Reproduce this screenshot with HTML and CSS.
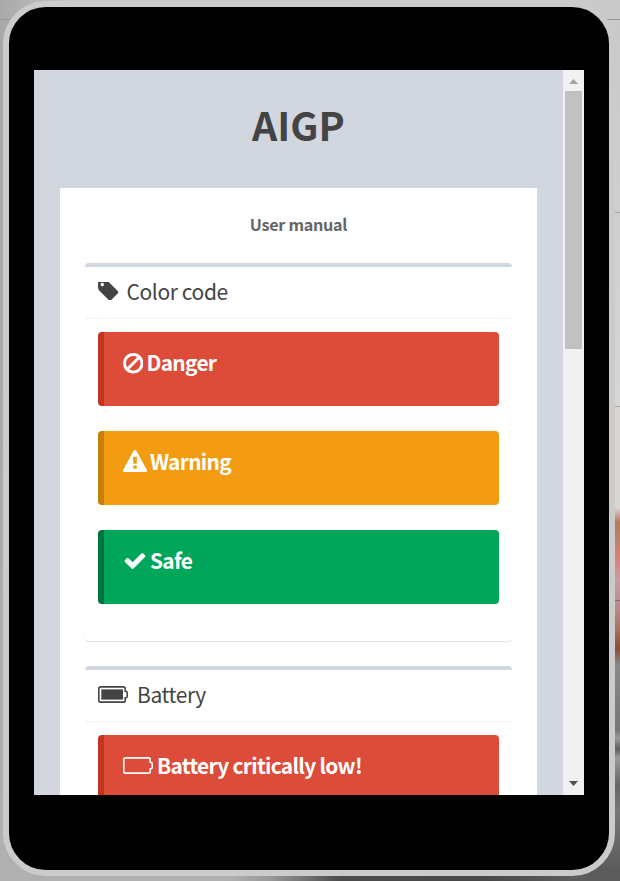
FILE: index.html
```
<!DOCTYPE html>
<html lang="en">
<head>
<meta charset="utf-8">
<title>AIGP</title>
<link rel="stylesheet" href="styles.css">
</head>
<body>
<div class="backdrop"></div>
<div class="tablet">
  <div class="screen">
    <main class="page">
      <h1 class="brand">AIGP</h1>
      <div class="manual">
        <p class="subtitle">User manual</p>
        <section class="box">
          <h2 class="box-title">
            <svg class="tag" viewBox="128 256 1536 1408"><path d="M576 448q0-53-37.500-90.500t-90.500-37.500-90.500 37.500-37.500 90.500 37.500 90.500 90.500 37.500 90.500-37.500 37.500-90.500zm1067 576q0 53-37 90l-491 492q-39 37-91 37-53 0-90-37l-715-716q-38-37-64.500-101t-26.500-117v-416q0-52 38-90t90-38h416q53 0 117 26.500t102 64.500l715 714q37 39 37 91z"/></svg>
            <span>Color code</span>
          </h2>
          <div class="alert danger">
            <svg class="ban" viewBox="128 125 1536 1536"><path d="M1440 893q0-161-87-295l-754 753q137 89 297 89 111 0 211.500-43.500t173.500-116.500 116-174.500 43-212.500zm-999 299l755-754q-135-91-300-91-148 0-273 73t-198 199-73 274q0 162 89 299zm1223-299q0 157-61 300t-163.500 246-245 164-298.500 61-298.500-61-245-164-163.500-246-61-300 61-299.500 163.500-245.500 245-164 298.500-61 298.500 61 245 164 163.500 245.500 61 299.500z"/></svg>
            <span>Danger</span>
          </div>
          <div class="alert warning">
            <svg class="triangle" viewBox="0 0 1792 1664"><path d="M1024 1375v-190q0-14-9.500-23.500t-22.500-9.500h-192q-13 0-22.500 9.500t-9.500 23.500v190q0 14 9.500 23.500t22.500 9.500h192q13 0 22.500-9.500t9.500-23.500zm-2-374l18-459q0-12-10-19-13-11-24-11h-220q-11 0-24 11-10 7-10 21l17 457q0 10 10 16.500t24 6.500h185q14 0 23.500-6.500t10.500-16.500zm-14-934l768 1408q35 63-2 126-17 29-46.500 46t-63.500 17h-1536q-34 0-63.500-17t-46.500-46q-37-63-2-126l768-1408q17-31 47-49t65-18 65 18 47 49z"/></svg>
            <span>Warning</span>
          </div>
          <div class="alert safe">
            <svg class="check" viewBox="0 334 1792 1188"><path d="M1671 566q0 40-28 68l-724 724-136 136q-28 28-68 28t-68-28l-136-136-362-362q-28-28-28-68t28-68l136-136q28-28 68-28t68 28l294 295 656-657q28-28 68-28t68 28l136 136q28 28 28 68z"/></svg>
            <span>Safe</span>
          </div>
        </section>
        <section class="box">
          <h2 class="box-title">
            <svg class="battery" viewBox="0 0 31 17"><path class="shell" d="M2.500 .9H25.500Q27.200 .9 27.200 2.600V5.200H27.900Q29.200 5.200 29.200 6.500V10.500Q29.200 11.800 27.900 11.800H27.200V14.400Q27.200 16.100 25.500 16.100H2.500Q.8 16.100 .8 14.400V2.600Q.8 .9 2.500 .9Z"/><path d="M3.300 3.400H25V13.600H3.300Z"/></svg>
            <span>Battery</span>
          </h2>
          <div class="alert danger">
            <svg class="battery" viewBox="0 0 31 17"><path class="shell" d="M2.500 .9H25.500Q27.200 .9 27.200 2.600V5.200H27.900Q29.200 5.200 29.200 6.500V10.500Q29.200 11.800 27.900 11.800H27.200V14.400Q27.200 16.100 25.500 16.100H2.500Q.8 16.100 .8 14.400V2.600Q.8 .9 2.500 .9Z"/></svg>
            <span>Battery critically low!</span>
          </div>
        </section>
      </div>
    </main>
    <div class="scrollbar">
      <svg class="arrow" viewBox="0 0 21 21"><path d="M6 14 10.500 9 15 14Z"/></svg>
      <div class="thumb"></div>
      <svg class="arrow down" viewBox="0 0 21 21"><path d="M6 7H15L10.500 12Z"/></svg>
    </div>
  </div>
</div>
</body>
</html>
```
FILE: styles.css
```
* { box-sizing: border-box; }
body {
  margin: 0;
  width: 620px;
  height: 881px;
  overflow: hidden;
  padding: 1px 0 0 3px;
  font-family: "Noto Sans CJK SC", "Noto Sans", sans-serif;
  color: #444;
  background: linear-gradient(90deg, #999 0 11px, transparent 11px) 0 19px / 100% 1px no-repeat,
    linear-gradient(90deg, #a9a9a9, #c9c9c9 80px, #cbcbcb) 0 0 / 100% 20px no-repeat,
    linear-gradient(90deg, #b0b0b0 0 230px, #999 270px, #4c4c4c 340px, #484848 480px, #5c5c5c 570px) 0 840px / 100% 41px no-repeat,
    linear-gradient(#a8a8a8, #aaa 50%, #b0b0b0);
}
.backdrop {
  position: absolute;
  left: 590px;
  top: 0;
  width: 30px;
  height: 881px;
  background:
    linear-gradient(#999, #999) 0 19px / 30px 1px no-repeat,
    linear-gradient(#aaa, #aaa) 0 212px / 30px 1px no-repeat,
    linear-gradient(#aaa, #aaa) 0 406px / 30px 1px no-repeat,
    linear-gradient(#966, #966) 0 600px / 30px 1px no-repeat,
    linear-gradient(#c9c9c9 0, #d0cecd 200px, #d8d5d3 400px, #d8d5d3 508px, #b87958 522px, #b9826b 540px, #dc7c76 555px, #c7a09b 580px, #b58a85 610px, #a8715f 630px, #8b4b34 648px, #888 665px, #777 730px, #999 738px, #5f5f5f 749px, #9a9a9a 758px, #666 785px, #777 810px, #5c5c5c 870px);
}
.tablet {
  position: relative;
  width: 612px;
  height: 875px;
  padding: 63px 25px 75px;
  border: 6px solid #cbcbcb;
  border-radius: 43px;
  background: #000;
}
.screen {
  display: grid;
  grid-template-columns: 529px 21px;
  width: 550px;
  height: 725px;
  overflow: hidden;
}
.page {
  height: 725px;
  overflow: hidden;
  padding: 0 26px;
  background: #d2d6de;
}
.brand {
  margin: 0;
  height: 118px;
  line-height: 108px;
  text-align: center;
  font-size: 39.4px;
  font-weight: 700;
}
.manual {
  height: 800px;
  padding: 0 25px;
  background: #fff;
}
.subtitle {
  margin: 0;
  height: 75px;
  line-height: 72px;
  text-align: center;
  color: #666;
  font-size: 16.2px;
  font-weight: 700;
  letter-spacing: -.3px;
}
.box {
  height: 378px;
  margin-bottom: 25px;
  padding: 0 13px;
  border-top: 4px solid #d2d6de;
  border-radius: 4px;
  box-shadow: 0 1px 1px rgba(0, 0, 0, .12);
}
.box-title {
  display: flex;
  align-items: center;
  gap: 8px;
  height: 52px;
  margin: 0 -13px 13px;
  padding: 0 13px 4px;
  border-bottom: 1px solid #f4f4f4;
  line-height: 30px;
  font-size: 21px;
  letter-spacing: -.4px;
  font-weight: 400;
}
svg { display: block; flex: none; fill: currentColor; }
.box-title svg { margin-top: 1px; }
.alert {
  display: flex;
  gap: 3.500px;
  height: 74px;
  margin-bottom: 25px;
  padding: 15px 18.500px;
  border-left: 6px solid;
  border-radius: 4px;
  line-height: 30px;
  font-size: 20.900px;
  letter-spacing: -.7px;
  font-weight: 700;
}
.alert span { color: #fff; }
.alert svg { fill: #fff; }
.danger { background: #dd4b39; border-color: #c23321; }
.warning { background: #f39c12; border-color: #c87f0a; }
.safe { background: #00a65a; border-color: #00733e; }
.tag { width: 20.500px; height: 18.800px; }
.ban { width: 20.500px; height: 20.500px; margin-top: 6px; }
.triangle { width: 24px; height: 22.300px; margin-top: 4px; }
.check { width: 24px; height: 16px; margin-top: 8px; }
.battery { width: 31px; height: 17px; }
.alert .battery { margin-top: 7px; }
.battery .shell { fill: none; stroke: currentColor; stroke-width: 1.600; }
.alert .shell { stroke: #fff; }
.scrollbar {
  display: flex;
  flex-direction: column;
  background: #f1f1f1;
}
.thumb { height: 258px; margin: 0 2px; background: #c1c1c1; }
.arrow { width: 21px; height: 21px; fill: #a3a3a3; }
.down { margin-top: auto; fill: #505050; }
```
